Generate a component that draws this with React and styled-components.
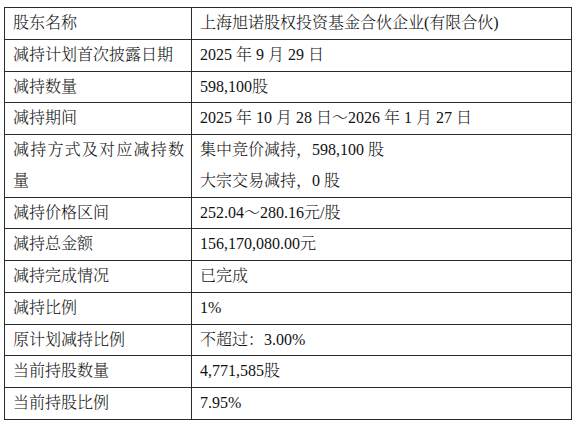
import styled, { createGlobalStyle } from "styled-components";

const rows = [
  { label: "股东名称", value: ["上海旭诺股权投资基金合伙企业(有限合伙)"] },
  { label: "减持计划首次披露日期", value: ["2025 年 9 月 29 日"] },
  { label: "减持数量", value: ["598,100股"] },
  { label: "减持期间", value: ["2025 年 10 月 28 日～2026 年 1 月 27 日"] },
  {
    label: "减持方式及对应减持数量",
    value: ["集中竞价减持，598,100 股", "大宗交易减持，0 股"],
  },
  { label: "减持价格区间", value: ["252.04～280.16元/股"] },
  { label: "减持总金额", value: ["156,170,080.00元"] },
  { label: "减持完成情况", value: ["已完成"] },
  { label: "减持比例", value: ["1%"] },
  { label: "原计划减持比例", value: ["不超过：3.00%"] },
  { label: "当前持股数量", value: ["4,771,585股"] },
  { label: "当前持股比例", value: ["7.95%"] },
];

const App = () => {
  return (
    <>
      <GlobalStyle />
      <Page>
        <Table>
          <colgroup>
            <col style={{ width: "187px" }} />
            <col />
          </colgroup>
          <tbody>
            {rows.map((row) => (
              <tr key={row.label}>
                <LabelCell>{row.label}</LabelCell>
                <ValueCell>
                  {row.value.map((line) => (
                    <Line key={line}>{line}</Line>
                  ))}
                </ValueCell>
              </tr>
            ))}
          </tbody>
        </Table>
      </Page>
    </>
  );
};

export default App;

const GlobalStyle = createGlobalStyle`
  body {
    margin: 0;
    background: #ffffff;
    font-family: "Liberation Serif", "Noto Serif CJK SC", "Noto Sans CJK SC", serif;
    font-weight: 300;
    color: #111111;
  }
`;

const Page = styled.main`
  padding: 7px 0 0 4px;
  width: 568px;
`;

const Table = styled.table`
  width: 568px;
  border-collapse: collapse;
  table-layout: fixed;
  font-size: 16px;
`;

const Cell = styled.td`
  border: 1px solid #2a2a2a;
  line-height: 30.75px;
  vertical-align: middle;
  padding: 0;
`;

const LabelCell = styled(Cell)`
  padding: 0 7px 0 8px;
  text-align: justify;
  text-justify: inter-character;
`;

const ValueCell = styled(Cell)`
  padding: 0 8px 0 8px;
`;

const Line = styled.div`
  white-space: nowrap;
`;
